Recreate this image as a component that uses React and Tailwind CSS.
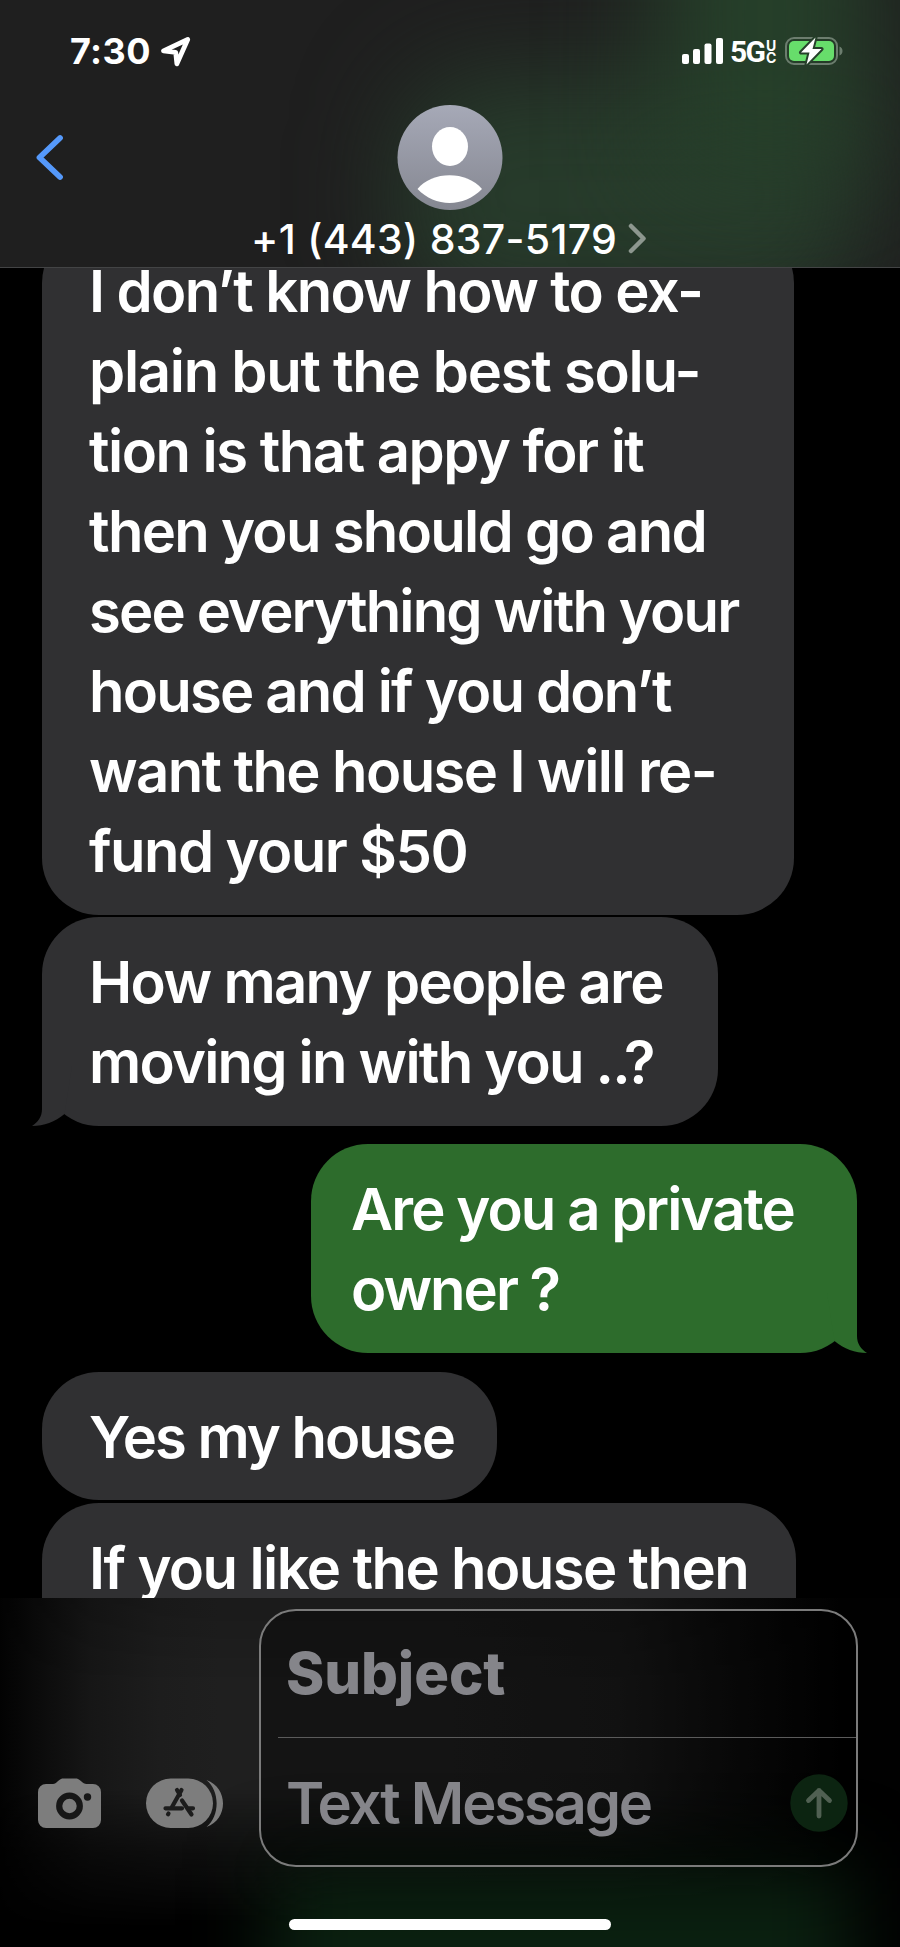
import clsx from "clsx";

const messages = [
  {
    id: 1,
    from: "them",
    className: "w-[752px] mt-[-42px]",
    lines: [
      { text: "I don’t know how to ex-", className: "tracking-[-1.6px]" },
      { text: "plain but the best solu-", className: "tracking-[-1.28px]" },
      { text: "tion is that appy for it", className: "tracking-[-1.5px]" },
      { text: "then you should go and", className: "tracking-[-1.7px]" },
      { text: "see everything with your", className: "tracking-[-1.85px]" },
      { text: "house and if you don’t", className: "tracking-[-1.8px]" },
      { text: "want the house I will re-", className: "tracking-[-1.6px]" },
      { text: "fund your $50", className: "tracking-[-1.55px]" },
    ],
  },
  {
    id: 2,
    from: "them",
    tail: true,
    className: "w-[675.5px] mt-[2.5px]",
    lines: [
      { text: "How many people are", className: "tracking-[-1.65px]" },
      { text: "moving in with you ..?", className: "tracking-[-1.78px]" },
    ],
  },
  {
    id: 3,
    from: "me",
    tail: true,
    className: "w-[546px] mt-[18.5px]",
    lines: [
      { text: "Are you a private", className: "tracking-[-1.9px]" },
      { text: "owner ?", className: "tracking-[-2px]" },
    ],
  },
  {
    id: 4,
    from: "them",
    className: "w-[455px] mt-[19px]",
    lines: [{ text: "Yes my house", className: "tracking-[-2px]" }],
  },
  {
    id: 5,
    from: "them",
    className: "w-[754px] h-[208px] mt-[3px]",
    lines: [{ text: "If you like the house then", className: "tracking-[-1.6px]" }],
  },
];

function StatusBar() {
  return (
    <div className="flex items-start justify-between pt-[37px] pl-[70px] pr-[56px] h-[105px]">
      <div className="flex items-start">
        <span className="text-[36px] leading-[28px] font-bold tracking-[0.4px] w-[91px]">7:30</span>
        <svg className="w-[30px] h-[30px]" viewBox="0 0 30 30" fill="none">
          <path
            d="M2.500 13.800 26.700 2.500 15.900 26.800 14.700 15.300Z"
            stroke="white"
            strokeWidth="4.800"
            strokeLinejoin="round"
          />
        </svg>
      </div>

      <div className="flex items-start">
        <svg className="w-[41px] h-[28px]" viewBox="0 0 41 28" fill="white">
          <rect x="0" y="17" width="7" height="10" rx="2" />
          <rect x="11" y="12" width="7" height="15" rx="2" />
          <rect x="22.5" y="6.500" width="7" height="20.500" rx="2" />
          <rect x="34" y="1" width="7" height="26" rx="2" />
        </svg>
        <span className="ml-[7px] w-[36px] text-[30px] leading-[30px] font-bold font-['Roboto',sans-serif] tracking-[-1.6px]">
          5G
        </span>
        <span className="flex flex-col w-[19px] pt-[3px] text-[14px] leading-[12px] font-bold">
          <span>U</span>
          <span>C</span>
        </span>
        <svg className="w-[59px] h-[28px]" viewBox="0 0 59 28">
          <rect x="1" y="1" width="51" height="26" rx="8" fill="none" stroke="#6c7d6e" strokeWidth="2" />
          <rect x="4" y="4" width="45" height="20" rx="5" fill="#67dd6b" />
          <path d="M54.500 9.500c4 1.500 4 7.500 0 9z" fill="#6c7d6e" />
          <path
            d="M30.500 0.500 16 15.500h8.500l-3 12L36.500 12h-9z"
            fill="white"
            stroke="#26402a"
            strokeWidth="4"
            strokeLinejoin="round"
            paintOrder="stroke"
          />
        </svg>
      </div>
    </div>
  );
}

function Header() {
  return (
    <header className="relative z-10 h-[268px] shrink-0 overflow-hidden bg-[#1f1f1f] border-b border-[#434445]">
      {/* Blurred green showing through the bar */}
      <div className="absolute left-[400px] top-[75px] w-[460px] h-[240px] rounded-[80px] bg-[#273b2b] blur-[50px]" />
      <div className="absolute left-[660px] top-[-120px] w-[210px] h-[300px] bg-[#26402a] blur-[55px]" />
      <div className="relative">
        <StatusBar />
        <div className="flex items-start">
          <svg className="ml-[35px] mt-[28px] w-[30px] h-[48px]" viewBox="0 0 30 48" fill="none">
            <path
              d="M25 5 4.500 24.500 25 44"
              stroke="#5599fb"
              strokeWidth="5.800"
              strokeLinecap="round"
              strokeLinejoin="round"
            />
          </svg>
          <svg className="ml-[332px] w-[106px] h-[106px]" viewBox="0 0 106 106">
            <defs>
              <linearGradient id="avatar" x1="0" y1="0" x2="0" y2="1">
                <stop offset="0" stopColor="#a6a9b7" />
                <stop offset="1" stopColor="#858791" />
              </linearGradient>
            </defs>
            <circle cx="53" cy="52.500" r="52.500" fill="url(#avatar)" />
            <ellipse cx="53" cy="41.500" rx="18" ry="19.500" fill="white" />
            <path d="M20.500 84C35 65.500 70 65.500 85 84C67 102.500 38 102.500 20.500 84Z" fill="white" />
          </svg>
        </div>
        <div className="flex items-center pl-[251px] mt-[3px] h-[50px]">
          <span className="w-[377px] text-[41px] leading-[50px] font-[550] whitespace-nowrap tracking-[0.3px]">
            +1 (443) 837-5179
          </span>
          <svg className="w-[20px] h-[32px]" viewBox="0 0 20 32" fill="none">
            <path
              d="M3 3 15.500 15.500 3 28"
              stroke="#8d978f"
              strokeWidth="4.500"
              strokeLinecap="round"
              strokeLinejoin="round"
            />
          </svg>
        </div>
      </div>
    </header>
  );
}

function Tail({ mine }) {
  return (
    <svg
      className={clsx(
        "absolute bottom-0 w-[40px] h-[60px]",
        mine ? "right-[-10px] -scale-x-100 text-[#2d6c2c]" : "left-[-10px] text-[#303032]"
      )}
      viewBox="0 0 40 60"
      fill="currentColor"
    >
      <path d="M10 0V43C10 51 6 56 0 60C12 60 23 56 32.500 48L40 0Z" />
    </svg>
  );
}

function Bubble({ message }) {
  const mine = message.from === "me";

  return (
    <div
      className={clsx(
        "relative shrink-0 pt-[25px] pb-[23.5px] rounded-[57px] text-[58px] leading-[80px] font-semibold whitespace-nowrap",
        mine ? "self-end mr-[43px] pl-[40px] bg-[#2d6c2c]" : "self-start ml-[42px] pl-[47px] bg-[#303032]",
        message.className
      )}
    >
      {message.lines.map((line) => (
        <div key={line.text} className={line.className}>
          {line.text}
        </div>
      ))}
      {message.tail && <Tail mine={mine} />}
    </div>
  );
}

function CameraIcon() {
  return (
    <svg className="w-[64px] h-[51px]" viewBox="0 0 64 51">
      <path
        d="M8 6h7c2 0 3-1 4.500-2.500S23 0.500 25 0.500h13c2 0 4 1.500 5.500 3S46.500 6 48.500 6H55a8 8 0 0 1 8 8v28a8 8 0 0 1-8 8H8a8 8 0 0 1-8-8V14a8 8 0 0 1 8-8Z"
        fill="#7d7d7d"
      />
      <circle cx="31.500" cy="28" r="10.300" fill="none" stroke="#171717" strokeWidth="6.200" />
      <circle cx="49.500" cy="19" r="3.700" fill="#171717" />
    </svg>
  );
}

function AppsIcon() {
  return (
    <svg className="w-[78px] h-[51px]" viewBox="0 0 78 51">
      <rect x="0" y="0.500" width="67" height="49.500" rx="24.700" fill="#7d7d7d" />
      <path d="M60.500 2C82.500 10 82.500 41 60.500 49C74 38 74 13 60.500 2Z" fill="#7d7d7d" />
      <g stroke="#1c1c1c" strokeWidth="4.200" strokeLinecap="round" fill="none">
        <path d="M35.500 12 26 29" />
        <path d="M31 12 34 17" />
        <path d="M36 22.500 45.500 36.500" />
        <path d="M19.500 30.300H36M43 30.300h4" />
        <path d="M22.500 35.500 22 36.300" />
      </g>
    </svg>
  );
}

function Composer() {
  return (
    <footer className="relative h-[349px] shrink-0 overflow-hidden bg-black">
      {/* Blurred bubbles behind the bar */}
      <div className="absolute inset-x-0 top-0 h-[340px] bg-[linear-gradient(90deg,#020202_0px,#090909_30px,#161616_90px,#1d1d1d_160px,#1f1f1f_220px,#1f1f1f_450px,#1b1b1b_620px,#0e0e0e_720px,#010101_840px)] mask-[linear-gradient(180deg,rgba(0,0,0,0.85)_0px,#000_90px,#000_190px,rgba(0,0,0,0.45)_255px,transparent_330px)]" />
      <div className="absolute left-[270px] top-[270px] w-[580px] h-[170px] bg-[#0a2010] blur-[40px]" />
      <div className="relative flex items-end pt-[11px] pl-[38px]">
        <div className="flex items-center pb-[38px]">
          <CameraIcon />
          <div className="w-[44px]" />
          <AppsIcon />
        </div>
        <div className="ml-[35px] w-[599px] h-[258px] rounded-[37px] border-2 border-[#7b7b7b] bg-black/35 font-semibold text-[58px] text-[#85858a]">
          <div className="h-[126px] pl-[25px] pt-[22px] leading-[80px] font-extrabold tracking-[-0.1px]">Subject</div>
          <div className="ml-[17px] h-px bg-[#5b5b5b]" />
          <div className="flex items-start justify-between pl-[25px] pr-[8px] pt-[25px]">
            <span className="leading-[80px] whitespace-nowrap tracking-[-2.2px]">Text Message</span>
            <svg className="mt-[11px] w-[58px] h-[58px]" viewBox="0 0 58 58" fill="none">
              <circle cx="29" cy="29" r="28.700" fill="#0c2411" />
              <path
                d="M29 42V16.500M18.500 26.500 29 16.500 39.500 26.500"
                stroke="#506052"
                strokeWidth="4.800"
                strokeLinecap="round"
                strokeLinejoin="round"
              />
            </svg>
          </div>
        </div>
      </div>
      <div className="relative mt-[52px] mx-auto w-[322px] h-[11px] rounded-full bg-white" />
    </footer>
  );
}

export default function App() {
  return (
    <div className="w-[900px] h-[1947px] flex flex-col overflow-hidden bg-black text-white font-['Inter',sans-serif]">
      <Header />
      <main className="flex-1 min-h-0 flex flex-col overflow-hidden">
        {messages.map((message) => (
          <Bubble key={message.id} message={message} />
        ))}
      </main>
      <Composer />
    </div>
  );
}
